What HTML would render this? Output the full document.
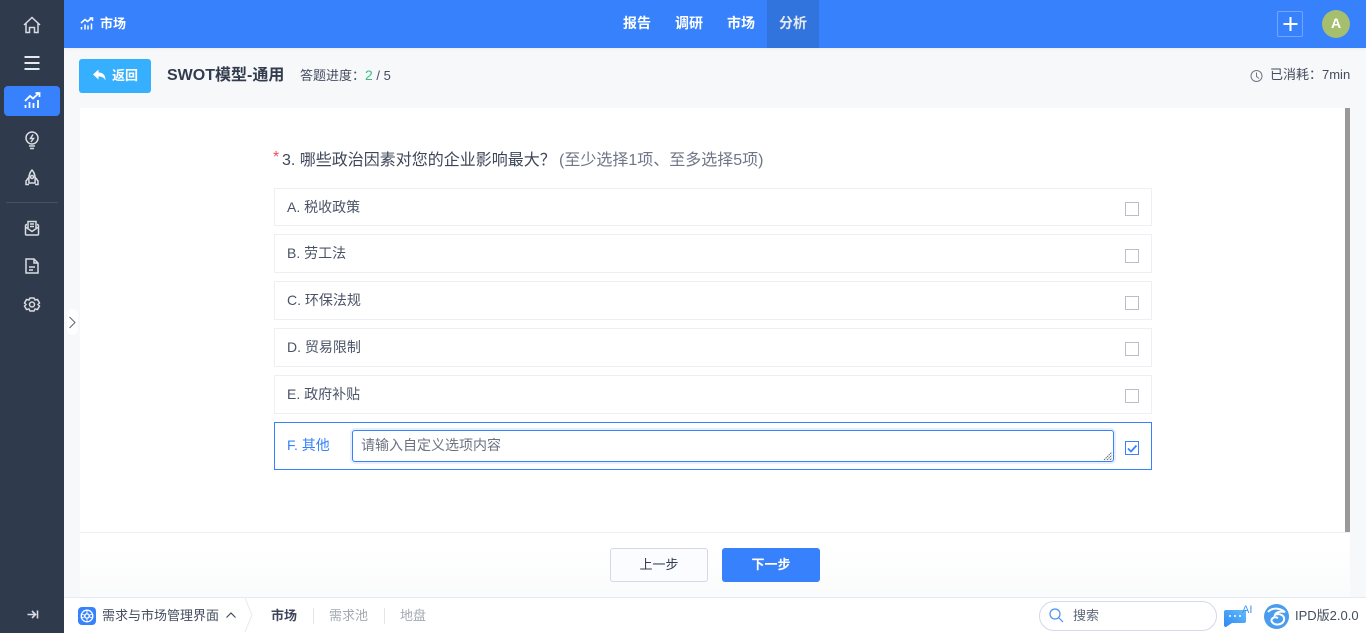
<!DOCTYPE html>
<html lang="zh"><head><meta charset="utf-8"><title>市场</title>
<style>
*{box-sizing:border-box;margin:0;padding:0}
html,body{width:1366px;height:633px;overflow:hidden;background:#f7f8fa;font-family:"Liberation Sans","Noto Sans CJK SC",sans-serif;color:#2f3a4d}
.a{position:absolute;white-space:nowrap}
svg{position:absolute;fill:none;overflow:visible}
.opt{position:absolute;left:274px;width:878px;background:#fff;border:1px solid #eeeff2;font-size:14px;color:#4a5366;padding-left:12px}
.cb{position:absolute;left:1125px;width:14px;height:14px;border:1px solid #b9bec9;background:#fff}
</style></head><body>
<div class="a" style="left:0;top:0;width:64px;height:633px;background:#2f3a4d"></div>
<div class="a" style="left:4px;top:86px;width:56px;height:30px;background:#3782fc;border-radius:4px"></div>
<svg style="left:0;top:0" width="64" height="633" stroke="#d9dce1" stroke-width="1.500">
<path d="M24 25 L32 17.500 L40 25 M26 23.500 V32.500 H29.500 V27.500 H34.500 V32.500 H38 V23.500"/>
<path d="M24.500 57 H39.500 M24.500 63 H39.500 M24.500 69 H39.500" stroke="#e6e8ec" stroke-width="2"/>
<path d="M25 101 L30 96 L33 98.500 L39 93 M35.500 93 H39.500 V97 M25.500 108 V105 M29.500 108 V102 M33.500 108 V103 M38 108 V100" stroke="#fff" stroke-width="1.800"/>
<circle cx="32" cy="138" r="6"/><path d="M29 146 H35 M30 148.500 H34 M33 134.500 L30.500 138.500 H33.500 L31 142"/>
<path d="M32 170 C29 173 28.500 177 29 183 H35 C35.500 177 35 173 32 170 Z M29 177 L26 181 V184.500 H29 M35 177 L38 181 V184.500 H35"/><circle cx="32" cy="177" r="1.500"/>
<path d="M25.500 226 Q25.500 224.500 27 224.500 M38.500 226 Q38.500 224.500 37 224.500 M25.500 226 V234 Q25.500 235 26.500 235 H37.500 Q38.500 235 38.500 234 V226 M28 228 V221.500 H36 V228 M30 224 H34 M30 226.500 H34 M25.500 227 L32 231.500 L38.500 227"/>
<path d="M26 259 H34 L38 263 V273 H26 Z M34 259 V263 H38 M29 267 H35 M29 270 H33"/>
<path d="M30 298 H34 L35 300 L37.500 299.500 L39.500 303 L38 304.500 L39.500 306 L37.500 309.500 L35 309 L34 311 H30 L29 309 L26.500 309.500 L24.500 306 L26 304.500 L24.500 303 L26.500 299.500 L29 300 Z"/><circle cx="32" cy="304.500" r="2.500"/>
<path d="M27.500 614.500 H35 M32 611 L35.500 614.500 L32 618 M37.500 610.500 V618.500" stroke-width="1.600"/>
<path d="M6 202.500 H58" stroke="#465064" stroke-width="1"/>
</svg>

<div class="a" style="left:64px;top:0;width:1302px;height:48px;background:#3782fc;box-shadow:0 1px 4px rgba(0,0,0,.05)"></div>
<svg style="left:0;top:0" width="140" height="48" stroke="#fff" stroke-width="1.500">
<path d="M81 23 L85 19.500 L87.500 21.500 L92 18 M89.500 18 H92.500 V21 M81.500 29.500 V27 M85 29.500 V24.500 M88 29.500 V25.500 M91.500 29.500 V23.500"/>
</svg>
<div class="a" style="left:100px;top:14px;font-size:13px;line-height:20px;color:#fff;font-weight:700">市场</div>
<div class="a" style="left:767px;top:0;width:52px;height:48px;background:#3174dd"></div>
<div class="a" style="left:623px;top:13px;font-size:14px;line-height:20px;color:#fff;font-weight:700">报告</div>
<div class="a" style="left:675px;top:13px;font-size:14px;line-height:20px;color:#fff;font-weight:700">调研</div>
<div class="a" style="left:727px;top:13px;font-size:14px;line-height:20px;color:#fff;font-weight:700">市场</div>
<div class="a" style="left:779px;top:13px;font-size:14px;line-height:20px;color:#e6e9ee;font-weight:700">分析</div>
<div class="a" style="left:1277px;top:11px;width:26px;height:26px;border:1px solid #73a6fb;border-radius:2px"></div>
<svg style="left:0;top:0" width="1366" height="48" stroke="#fff" stroke-width="2"><path d="M1290.500 17 V31 M1283.500 24 H1297.500"/></svg>
<div class="a" style="left:1322px;top:10px;width:28px;height:28px;border-radius:50%;background:#a5bf6f;color:#fff;font-size:14px;line-height:27px;text-align:center;font-weight:700">A</div>

<div class="a" style="left:79px;top:59px;width:72px;height:34px;background:#36b0fe;border-radius:3px"></div>
<svg style="left:0;top:0" width="120" height="100" fill="none"><path d="M93 74.500 L98.500 69.500 V72.500 C103 72.500 105.500 75 105.500 80.500 C104 77.500 102 76.500 98.500 76.500 V79.500 Z" style="fill:#fff"/></svg>
<div class="a" style="left:112px;top:66px;font-size:13px;line-height:19px;color:#fff;font-weight:700">返回</div>
<div class="a" style="left:167px;top:65px;font-size:16px;line-height:22px;font-weight:700;color:#333c4e">SWOT模型-通用</div>
<div class="a" style="left:300px;top:66px;font-size:13px;line-height:18px;color:#444d5f">答题进度：<span style="color:#3bbd85;font-size:14px">2</span> / 5</div>
<svg style="left:0;top:0" width="1366" height="100" stroke="#6f7787" stroke-width="1"><circle cx="1256.500" cy="76" r="5.500"/><path d="M1256.500 72.500 V76.500 L1259 78.500"/></svg>
<div class="a" style="left:1270px;top:66px;font-size:13px;line-height:18px;color:#444d5f">已消耗：7min</div>

<div class="a" style="left:80px;top:108px;width:1270px;height:489px;background:linear-gradient(#fff 0,#fff 440px,#fafbfc 489px)"></div>
<div class="a" style="left:1345px;top:108px;width:5px;height:424px;background:#999"></div>
<div class="a" style="left:80px;top:532px;width:1270px;height:1px;background:#eeeff2"></div>
<div class="a" style="left:273px;top:147px;font-size:16px;line-height:22px;color:#f0524f">*</div>
<div class="a" style="left:282px;top:149px;font-size:16px;line-height:23px;color:#3e4759">3. 哪些政治因素对您的企业影响最大？</div>
<div class="a" style="left:559px;top:149px;font-size:16px;line-height:23px;color:#6f7787">(至少选择1项、至多选择5项)</div>

<div class="opt" style="top:188px;height:38px;line-height:36px">A. 税收政策</div>
<div class="opt" style="top:234px;height:39px;line-height:37px">B. 劳工法</div>
<div class="opt" style="top:281px;height:39px;line-height:37px">C. 环保法规</div>
<div class="opt" style="top:328px;height:39px;line-height:37px">D. 贸易限制</div>
<div class="opt" style="top:375px;height:39px;line-height:37px">E. 政府补贴</div>
<div class="cb" style="top:202px"></div><div class="cb" style="top:249px"></div><div class="cb" style="top:296px"></div><div class="cb" style="top:342px"></div><div class="cb" style="top:389px"></div>

<div class="opt" style="top:422px;height:48px;line-height:44px;border-color:#3782fc;color:#3782fc">F. 其他</div>
<div class="a" style="left:352px;top:430px;width:762px;height:32px;border:1px solid #3782fc;border-radius:3px;box-shadow:0 0 0 2px #e6effe;background:#fff;font-size:14px;line-height:29px;padding-left:8px;color:#6a7282">请输入自定义选项内容</div>
<svg style="left:0;top:0" width="1366" height="480"><path d="M1104 460 L1112 452 M1107 460 L1112 455 M1110 460 L1112 458" stroke="#666" stroke-width="1" stroke-dasharray="1.500 .7"/></svg>
<div class="cb" style="top:441px;border-color:#3782fc"></div>
<svg style="left:0;top:0" width="1366" height="480"><path d="M1128 448.500 L1131 451.500 L1136.500 445.500" stroke="#3782fc" stroke-width="1.800"/></svg>

<div class="a" style="left:610px;top:548px;width:98px;height:34px;border:1px solid #d5d8e4;border-radius:3px;background:#fbfcff;font-size:13px;line-height:31px;text-align:center;color:#333c4e">上一步</div>
<div class="a" style="left:722px;top:548px;width:98px;height:34px;border-radius:3px;background:#3782fc;font-size:13px;line-height:33px;text-align:center;color:#fff;font-weight:700">下一步</div>

<div class="a" style="left:67px;top:309px;width:11px;height:26px;background:#fff;border-radius:6px"></div>
<svg style="left:0;top:0" width="90" height="340" stroke="#5c6575" stroke-width="1"><path d="M69.500 317 L75 322.500 L69.500 328"/></svg>

<div class="a" style="left:64px;top:597px;width:1302px;height:36px;background:#fff;border-top:1px solid #e9eaee"></div>
<div class="a" style="left:78px;top:607px;width:18px;height:18px;border-radius:4px;background:#3782fc"></div>
<svg style="left:0;top:590px" width="260" height="43" stroke="#fff" stroke-width="1.300"><circle cx="87" cy="26" r="5.800"/><circle cx="87" cy="26" r="2.200"/><path d="M87 20.200 V23.800 M87 28.200 V31.800 M81.500 24.200 L85 25.300 M89 26.700 L92.500 27.800 M81.500 27.800 L85 26.700 M89 25.300 L92.500 24.200" stroke-width=".9"/></svg>
<div class="a" style="left:102px;top:606px;font-size:13px;line-height:19px;color:#444d5f">需求与市场管理界面</div>
<svg style="left:0;top:590px" width="260" height="43"><path d="M226.500 27.500 L231 23 L235.500 27.500" stroke="#444d5f" stroke-width="1.200"/><path d="M245 8 L252 25 L245 42" stroke="#e9eaee" stroke-width="1"/></svg>
<div class="a" style="left:271px;top:606px;font-size:13px;line-height:19px;font-weight:700;color:#3e4759">市场</div>
<div class="a" style="left:313px;top:608px;width:1px;height:16px;background:#e2e4e9"></div>
<div class="a" style="left:329px;top:606px;font-size:13px;line-height:19px;color:#a3a8b3">需求池</div>
<div class="a" style="left:384px;top:608px;width:1px;height:16px;background:#e2e4e9"></div>
<div class="a" style="left:400px;top:606px;font-size:13px;line-height:19px;color:#a3a8b3">地盘</div>

<div class="a" style="left:1039px;top:601px;width:178px;height:30px;border:1px solid #d5d9ea;border-radius:15px;background:#fff"></div>
<svg style="left:0;top:590px" width="1366" height="43" stroke="#4a90f5" stroke-width="1.200"><circle cx="1055" cy="24" r="5"/><path d="M1059 28 L1063 32"/></svg>
<div class="a" style="left:1073px;top:606px;font-size:13px;line-height:19px;color:#5f6879">搜索</div>
<svg style="left:0;top:590px" width="1366" height="43"><defs><linearGradient id="g" x1="0" y1="1" x2="1" y2="0"><stop offset="0" stop-color="#2f86f5"/><stop offset="1" stop-color="#62bdf8"/></linearGradient></defs><path d="M1226 20 H1246 V31 Q1246 33 1244 33 H1232 L1226 37 Q1224 37 1224 35 V22 Q1224 20 1226 20 Z" style="fill:url(#g)"/><path d="M1229 26 H1231 M1234 26 H1236 M1239 26 H1241" stroke="#fff" stroke-width="1.500"/></svg>
<div class="a" style="left:1242px;top:603px;font-size:11px;line-height:14px;color:#3b96f5">AI</div>
<div class="a" style="left:1264px;top:604px;width:25px;height:25px;border-radius:50%;background:#4a9cec"></div>
<svg style="left:0;top:590px" width="1366" height="43" stroke="#fff" stroke-width="2"><path d="M1268 22 C1272 17 1280 18 1285 22 C1280 21 1276 22 1275 25 C1279 23 1285 25 1284 30 C1283 35 1275 36 1272 32 C1270 29 1274 26 1278 28"/></svg>
<div class="a" style="left:1295px;top:606px;font-size:13px;line-height:19px;color:#444d5f">IPD版2.0.0</div>
</body></html>
